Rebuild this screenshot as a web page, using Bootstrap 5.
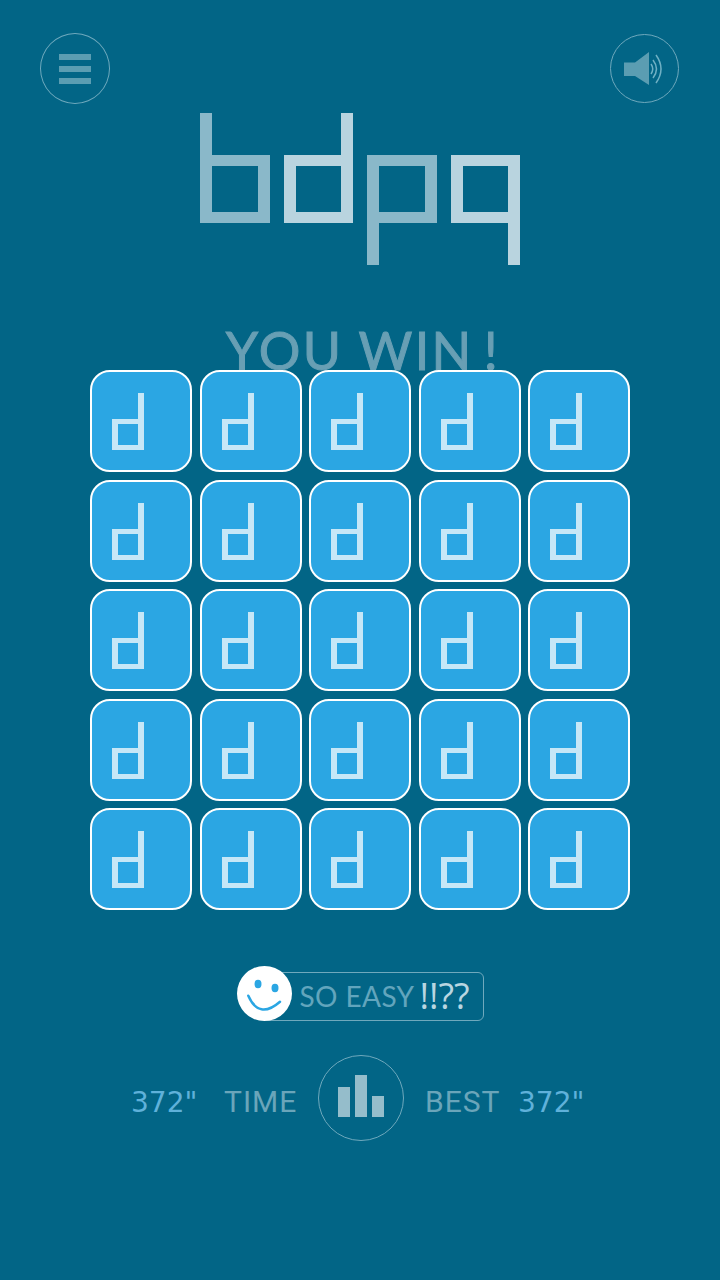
<!DOCTYPE html>
<html lang="en">
  <head>
    <meta charset="UTF-8" />
    <meta name="viewport" content="width=device-width, initial-scale=1.0" />
    <title>bdpq</title>
    <link
      rel="stylesheet"
      href="https://cdn.jsdelivr.net/npm/bootstrap@5.3.0/dist/css/bootstrap.min.css"
    />
    <style>
      body {
        background: #026586;
        height: 1280px;
        overflow: hidden;
      }
      .top-bar {
        padding: 33px 41px 0 40px;
        height: 113px;
      }
      .round-btn {
        width: 70px;
        height: 71px;
        border: 1px solid #6fa9bd;
        border-radius: 50%;
      }
      .round-btn.sound-btn {
        width: 69px;
        height: 69px;
        margin-top: 1px;
      }
      .menu-bars {
        width: 32px;
        gap: 6px;
      }
      .menu-bars span {
        height: 6px;
        background: #5b9db2;
      }

      /* square letters: one stem and one bowl */
      .ltr-stem {
        width: var(--sw);
        height: var(--sh);
        background: var(--c);
      }
      .ltr-bowl {
        width: var(--w);
        height: var(--h);
        border: solid var(--c);
        border-width: var(--bh) var(--sw);
      }
      .logo-row {
        --sw: 12px;
        --sh: 42px;
        --w: 69.5px;
        --h: 68px;
        --bh: 11px;
        gap: 14px;
        height: 157px;
      }
      .logo-row .ltr-desc {
        margin-top: 41.5px;
      }
      .logo-row .tone-a {
        --c: #8ab8c9;
      }
      .logo-row .tone-b {
        --c: #b9d4df;
      }
      .win-title {
        font-family: Lato, sans-serif;
        font-size: 52px;
        line-height: 60px;
        color: #689fb4;
        -webkit-text-stroke: 1px #689fb4;
        margin: 50px 0 -10px;
        letter-spacing: 2.4px;
        padding-left: 6px;
      }
      .win-mark {
        margin-left: 10px;
      }
      .tile-grid {
        display: grid;
        grid-template-columns: repeat(5, 102px);
        grid-auto-rows: 102px;
        gap: 7.5px;
        width: 540px;
        margin: 0 auto;
        position: relative;
      }
      .tile {
        background: #2ba6e3;
        border: 2px solid #fff;
        border-radius: 20px;
        padding: 21px 0 0 20px;
        --sw: 6px;
        --sh: 26px;
        --w: 32px;
        --h: 31px;
        --bh: 5.5px;
        --c: #c6e7f7;
      }
      .tile .ltr-d {
        width: 32px;
      }
      .easy-row {
        margin: 56px auto 0;
        width: 247px;
        height: 55px;
      }
      .easy-face {
        width: 55px;
        height: 55px;
        flex: none;
        position: relative;
        z-index: 1;
      }
      .easy-box {
        margin-left: -30px;
        padding: 0 0 2px 37px;
        height: 49px;
        width: 222px;
        border: 1px solid #6fa9bd;
        border-radius: 6px;
        flex: none;
      }
      .easy-text {
        font-family: Lato, sans-serif;
        font-size: 28px;
        letter-spacing: 0.4px;
        color: #62a5bd;
        white-space: nowrap;
      }
      .easy-marks {
        font-family: "Open Sans", sans-serif;
        font-size: 36px;
        line-height: 1;
        color: #b9d6e1;
        margin-left: 5px;
        white-space: nowrap;
      }
      .stats-row {
        margin-top: 34px;
        height: 86px;
        padding-left: 131px;
      }
      .stat-num {
        font-family: "DejaVu Sans", sans-serif;
        font-size: 28px;
        color: #5fb1da;
        width: 66px;
        white-space: nowrap;
        padding-top: 10px;
      }
      .stat-label {
        font-family: Roboto, sans-serif;
        font-size: 30px;
        letter-spacing: 1px;
        color: #6aa5ba;
        width: 73px;
        white-space: nowrap;
        padding-top: 7px;
      }
      .time-label {
        margin: 0 21px 0 27px;
      }
      .best-label {
        margin: 0 20px 0 21px;
      }
      .chart-btn {
        width: 86px;
        height: 86px;
        border: 1px solid #6fa9bd;
        border-radius: 50%;
        flex: none;
      }
      .chart-bars {
        gap: 5px;
        height: 42px;
        margin-bottom: 4px;
      }
      .chart-bars span {
        width: 12px;
        background: #95bdcb;
      }
    </style>
  </head>

  <body>
    <!-- Top buttons -->
    <div class="top-bar d-flex justify-content-between align-items-start">
      <div class="round-btn d-flex align-items-center justify-content-center">
        <div class="menu-bars d-flex flex-column"><span class="d-block"></span><span class="d-block"></span><span class="d-block"></span></div>
      </div>
      <div class="round-btn sound-btn d-flex align-items-center justify-content-center">
        <svg width="44" height="36" viewBox="0 0 44 36">
          <path d="M1 11.500h11L26 1v33L12 25H1z" fill="#5b9db2" />
          <g fill="none" stroke="#6fb0c4" stroke-width="1.5">
            <path d="M28 13q3.500 5 0 10" />
            <path d="M30 9q7 9 0 18" />
            <path d="M33 4q10 14 0 28" />
          </g>
        </svg>
      </div>
    </div>

    <!-- Logo -->
    <div class="logo-row d-flex justify-content-center align-items-start">
      <div class="d-flex flex-column align-items-start tone-a"><div class="ltr-stem"></div><div class="ltr-bowl"></div></div>
      <div class="d-flex flex-column align-items-end tone-b"><div class="ltr-stem"></div><div class="ltr-bowl"></div></div>
      <div class="d-flex flex-column align-items-start tone-a ltr-desc"><div class="ltr-bowl"></div><div class="ltr-stem"></div></div>
      <div class="d-flex flex-column align-items-end tone-b ltr-desc"><div class="ltr-bowl"></div><div class="ltr-stem"></div></div>
    </div>

    <div class="win-title text-center">YOU WIN<span class="win-mark">!</span></div>

    <!-- Board, filled by the script below -->
    <div class="tile-grid" id="board"></div>

    <!-- Rating -->
    <div class="easy-row d-flex align-items-end">
      <svg class="easy-face" viewBox="0 0 55 55">
        <circle cx="27.500" cy="27.500" r="27.500" fill="#fff" />
        <ellipse cx="21" cy="18" rx="3.500" ry="4.200" fill="#2ba6e3" />
        <ellipse cx="38" cy="22" rx="3.500" ry="4.200" fill="#2ba6e3" />
        <path d="M11.300 29.700Q22 54 43 35.700" fill="none" stroke="#2ba6e3" stroke-width="2.500" stroke-linecap="round" />
      </svg>
      <div class="easy-box d-flex align-items-center">
        <span class="easy-text">SO EASY</span><span class="easy-marks">!!??</span>
      </div>
    </div>

    <!-- Time and best -->
    <div class="stats-row d-flex align-items-center">
      <span class="stat-num">372"</span>
      <span class="stat-label time-label">TIME</span>
      <div class="chart-btn d-flex align-items-center justify-content-center">
        <div class="chart-bars d-flex align-items-end">
          <span class="bar-a"></span><span class="bar-b"></span><span class="bar-c"></span>
        </div>
      </div>
      <span class="stat-label best-label">BEST</span>
      <span class="stat-num">372"</span>
    </div>

    <script src="https://cdn.jsdelivr.net/npm/bootstrap@5.3.0/dist/js/bootstrap.bundle.min.js"></script>
    <script>
      // Fill the 5x5 board
      const board = document.getElementById("board");
      for (let i = 0; i < 25; i++) {
        const tile = document.createElement("div");
        tile.className = "tile";
        tile.setAttribute("aria-label", "d");
        tile.innerHTML = `
          <div class="ltr-d d-flex flex-column align-items-end">
            <div class="ltr-stem"></div>
            <div class="ltr-bowl"></div>
          </div>`;
        board.appendChild(tile);
      }
      // Chart bar heights
      const heights = { "bar-a": 30, "bar-b": 42, "bar-c": 21 };
      Object.keys(heights).forEach((name) => {
        document.querySelector("." + name).style.height = heights[name] + "px";
      });
    </script>
  </body>
</html>
